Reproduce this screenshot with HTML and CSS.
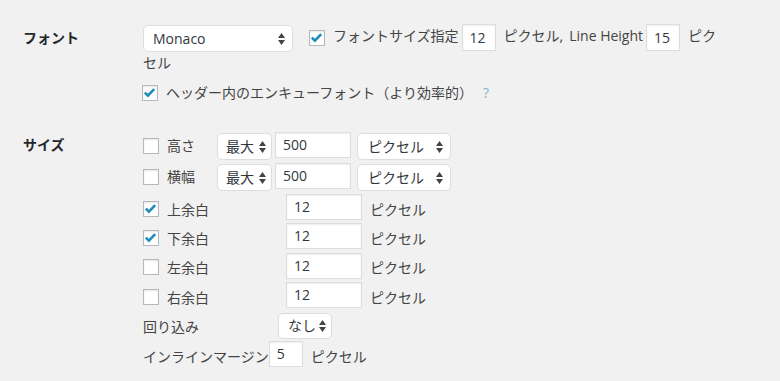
FILE: index.html
```html
<!DOCTYPE html>
<html lang="ja">
<head>
<meta charset="utf-8">
<link rel="stylesheet" href="styles.css">
</head>
<body>
<div class="form">
  <div class="th th-font">フォント</div>
  <div class="td td-font">
    <p class="line-font"><span class="select sel-font"><span class="sel-text">Monaco</span><svg class="arrows" width="7" height="12" viewBox="0 0 7 12"><path d="M3.5 0L7 5H0z M0 7h7L3.5 12z" fill="#444"/></svg></span><span class="cb checked"><svg width="16" height="16" viewBox="0 0 16 16"><path d="M2.8 7.6l3.1 3.1 6.3-6.6" fill="none" stroke="#1e8cbe" stroke-width="2.6"/></svg></span>フォントサイズ指定<span class="input w-sm">12</span>ピクセル,<span class="comma-gap"></span>Line Height<span class="input w-sm">15</span>ピクセル</p>
    <p class="line-enq"><span class="cb checked"><svg width="16" height="16" viewBox="0 0 16 16"><path d="M2.8 7.6l3.1 3.1 6.3-6.6" fill="none" stroke="#1e8cbe" stroke-width="2.6"/></svg></span>ヘッダー内のエンキューフォント（より効率的）<span class="help">?</span></p>
  </div>

  <div class="th th-size">サイズ</div>
  <div class="td td-size">
    <div class="row row-sel">
      <span class="cb"></span><span class="lbl lbl-hw">高さ</span>
      <span class="select sel-max"><span class="sel-text">最大</span><svg class="arrows" width="7" height="12" viewBox="0 0 7 12"><path d="M3.5 0L7 5H0z M0 7h7L3.5 12z" fill="#444"/></svg></span>
      <span class="input w-md">500</span>
      <span class="select sel-unit"><span class="sel-text">ピクセル</span><svg class="arrows" width="7" height="12" viewBox="0 0 7 12"><path d="M3.5 0L7 5H0z M0 7h7L3.5 12z" fill="#444"/></svg></span>
    </div>
    <div class="row row-sel">
      <span class="cb"></span><span class="lbl lbl-hw">横幅</span>
      <span class="select sel-max"><span class="sel-text">最大</span><svg class="arrows" width="7" height="12" viewBox="0 0 7 12"><path d="M3.5 0L7 5H0z M0 7h7L3.5 12z" fill="#444"/></svg></span>
      <span class="input w-md">500</span>
      <span class="select sel-unit"><span class="sel-text">ピクセル</span><svg class="arrows" width="7" height="12" viewBox="0 0 7 12"><path d="M3.5 0L7 5H0z M0 7h7L3.5 12z" fill="#444"/></svg></span>
    </div>
    <div class="row">
      <span class="cb checked"><svg width="16" height="16" viewBox="0 0 16 16"><path d="M2.8 7.6l3.1 3.1 6.3-6.6" fill="none" stroke="#1e8cbe" stroke-width="2.6"/></svg></span><span class="lbl lbl-m">上余白</span>
      <span class="input w-md">12</span><span class="unit">ピクセル</span>
    </div>
    <div class="row">
      <span class="cb checked"><svg width="16" height="16" viewBox="0 0 16 16"><path d="M2.8 7.6l3.1 3.1 6.3-6.6" fill="none" stroke="#1e8cbe" stroke-width="2.6"/></svg></span><span class="lbl lbl-m">下余白</span>
      <span class="input w-md">12</span><span class="unit">ピクセル</span>
    </div>
    <div class="row">
      <span class="cb"></span><span class="lbl lbl-m">左余白</span>
      <span class="input w-md">12</span><span class="unit">ピクセル</span>
    </div>
    <div class="row">
      <span class="cb"></span><span class="lbl lbl-m">右余白</span>
      <span class="input w-md">12</span><span class="unit">ピクセル</span>
    </div>
    <div class="row">
      <span class="lbl lbl-float">回り込み</span>
      <span class="select sel-none"><span class="sel-text">なし</span><svg class="arrows" width="7" height="12" viewBox="0 0 7 12"><path d="M3.5 0L7 5H0z M0 7h7L3.5 12z" fill="#444"/></svg></span>
    </div>
    <div class="row">
      <span class="lbl">インラインマージン</span>
      <span class="input w-xs">5</span><span class="unit">ピクセル</span>
    </div>
  </div>
</div>
</body>
</html>
```

FILE: styles.css
```css
html, body {
  margin: 0;
  padding: 0;
  background: #f1f1f1;
}
body {
  font-family: "Open Sans", "Noto Sans CJK JP", sans-serif;
  font-size: 14px;
  color: #444;
}
.form {
  display: grid;
  grid-template-columns: 120px 580px;
  padding-left: 23px;
  padding-top: 24px;
}
.th {
  grid-column: 1;
  font-weight: 700;
  color: #23282d;
  line-height: 28px;
}
.th-font { grid-row: 1; }
.th-size {
  grid-row: 2;
  padding-top: 28px;
  line-height: 26px;
}
.td-font {
  grid-row: 1;
  grid-column: 2;
}
.td-size {
  grid-row: 2;
  grid-column: 2;
  padding-top: 28px;
}
p { margin: 0; }
.line-font {
  line-height: 24px;
}
.line-font > * { vertical-align: middle; }
.comma-gap {
  display: inline-block;
  width: 6px;
}
.line-enq {
  margin-top: 7px;
  line-height: 22px;
  display: flex;
  align-items: center;
}
.select {
  display: inline-flex;
  align-items: center;
  justify-content: space-between;
  box-sizing: border-box;
  height: 27px;
  background: #fff;
  border: 1px solid #ddd;
  border-radius: 5px;
  padding: 0 7px 0 9px;
  color: #32373c;
}
.sel-font { width: 150px; margin-right: 16px; margin-top: 1px; margin-bottom: -1px; }
.sel-max { width: 55px; margin-right: 3px; padding-left: 8px; padding-right: 5px; }
.sel-unit { width: 94px; margin-left: 6px; padding-left: 10px; }
.sel-none { width: 54px; padding-right: 5px; }
.sel-text { line-height: 1; }
.arrows { display: block; }
.cb {
  display: inline-block;
  box-sizing: border-box;
  width: 16px;
  height: 16px;
  background: #fff;
  border: 1px solid #b4b9be;
  box-shadow: inset 0 1px 2px rgba(0,0,0,.1);
  position: relative;
  margin-right: 8px;
  flex: none;
}
.cb svg {
  position: absolute;
  left: -1px;
  top: -1px;
}
.line-enq .cb { margin-left: -1px; }
.input {
  display: inline-flex;
  align-items: center;
  box-sizing: border-box;
  height: 27px;
  background: #fff;
  border: 1px solid #ddd;
  box-shadow: inset 0 1px 2px rgba(0,0,0,.07);
  padding-left: 7px;
  color: #32373c;
  line-height: 1;
}
.w-sm { width: 34px; margin: 0 8px 0 3px; }
.w-md { width: 76px; }
.w-xs { width: 34px; }
.help {
  color: #83b1d3;
  margin-left: 10px;
}
.row {
  display: flex;
  align-items: center;
  height: 29.4px;
}
.row .input, .row .select { height: 26px; }
.row-sel { height: 31px; align-items: flex-start; }
.row-sel .select { height: 27px; margin-top: 1px; }
.row-sel .cb { margin-top: 6px; }
.row-sel .lbl { line-height: 27px; }
.row > .input { align-self: flex-start; }
.lbl { white-space: nowrap; }
.lbl-hw { width: 50px; }
.lbl-m { width: 119px; }
.lbl-float { width: 135px; }
.unit { margin-left: 8px; }
```
